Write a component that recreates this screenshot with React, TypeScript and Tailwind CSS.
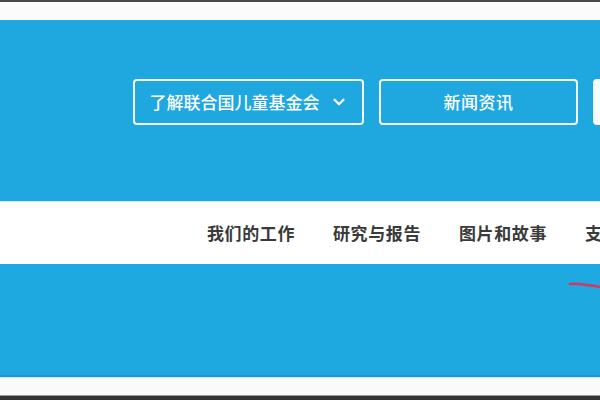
import { ChevronDown } from "lucide-react";

const navItems = ["我们的工作", "研究与报告", "图片和故事", "支持我们"];

export default function App() {
	return (
		<div
			className="relative h-[400px] w-[600px] overflow-hidden bg-[#fafafa]"
			style={{ fontFamily: '"Noto Sans CJK SC", "Noto Sans", sans-serif' }}
		>
			{/* window edge */}
			<div className="h-[2px] bg-[#4a4a4a]" />
			<div className="h-[18px] bg-[#fbfbfb]" />

			{/* header */}
			<div className="flex h-[181px] gap-[15px] bg-[#1fa8e0] pl-[133px] pt-[59px]">
				<button className="flex h-[46px] w-[231px] shrink-0 items-center justify-center gap-[10px] rounded-[4px] border-2 border-[#f4fbff] text-[17px] font-medium text-white">
					了解联合国儿童基金会
					<ChevronDown className="h-[18px] w-[18px]" strokeWidth={3} />
				</button>
				<button className="flex h-[46px] w-[199px] shrink-0 items-center justify-center rounded-[4px] border-2 border-[#f4fbff] text-[17px] font-medium tracking-[0.5px] text-white">
					新闻资讯
				</button>
				<button className="h-[46px] w-[120px] shrink-0 rounded-[4px] border-2 border-[#f4fbff] bg-[#f7fbfc]" />
			</div>

			{/* nav */}
			<nav className="flex h-[63px] items-center gap-[38px] border-t border-[#c9eefa] bg-white pl-[207px] shadow-[0_2px_3px_rgba(0,0,0,0.25)]">
				{navItems.map((item) => (
					<span key={item} className="shrink-0 text-[17px] font-bold tracking-[0.6px] whitespace-nowrap text-[#3a3a3a]">
						{item}
					</span>
				))}
			</nav>

			<div className="h-[113px] border-b-2 border-[#2196c8] bg-[#1fa9e1]" />
			<div className="h-[18px] border-t border-[#bdeefa] bg-[#fbfafa]" />
			<div className="h-[5px] border-t border-[#9a9a9a] bg-[#333]" />

			{/* annotation stroke */}
			<svg className="absolute top-[279px] left-[568px]" width="32" height="12" viewBox="0 0 32 12">
				<path d="M2 5 C 10 4, 20 6, 32 8" stroke="#d9355f" strokeWidth="2.5" fill="none" strokeLinecap="round" />
			</svg>
		</div>
	);
}
